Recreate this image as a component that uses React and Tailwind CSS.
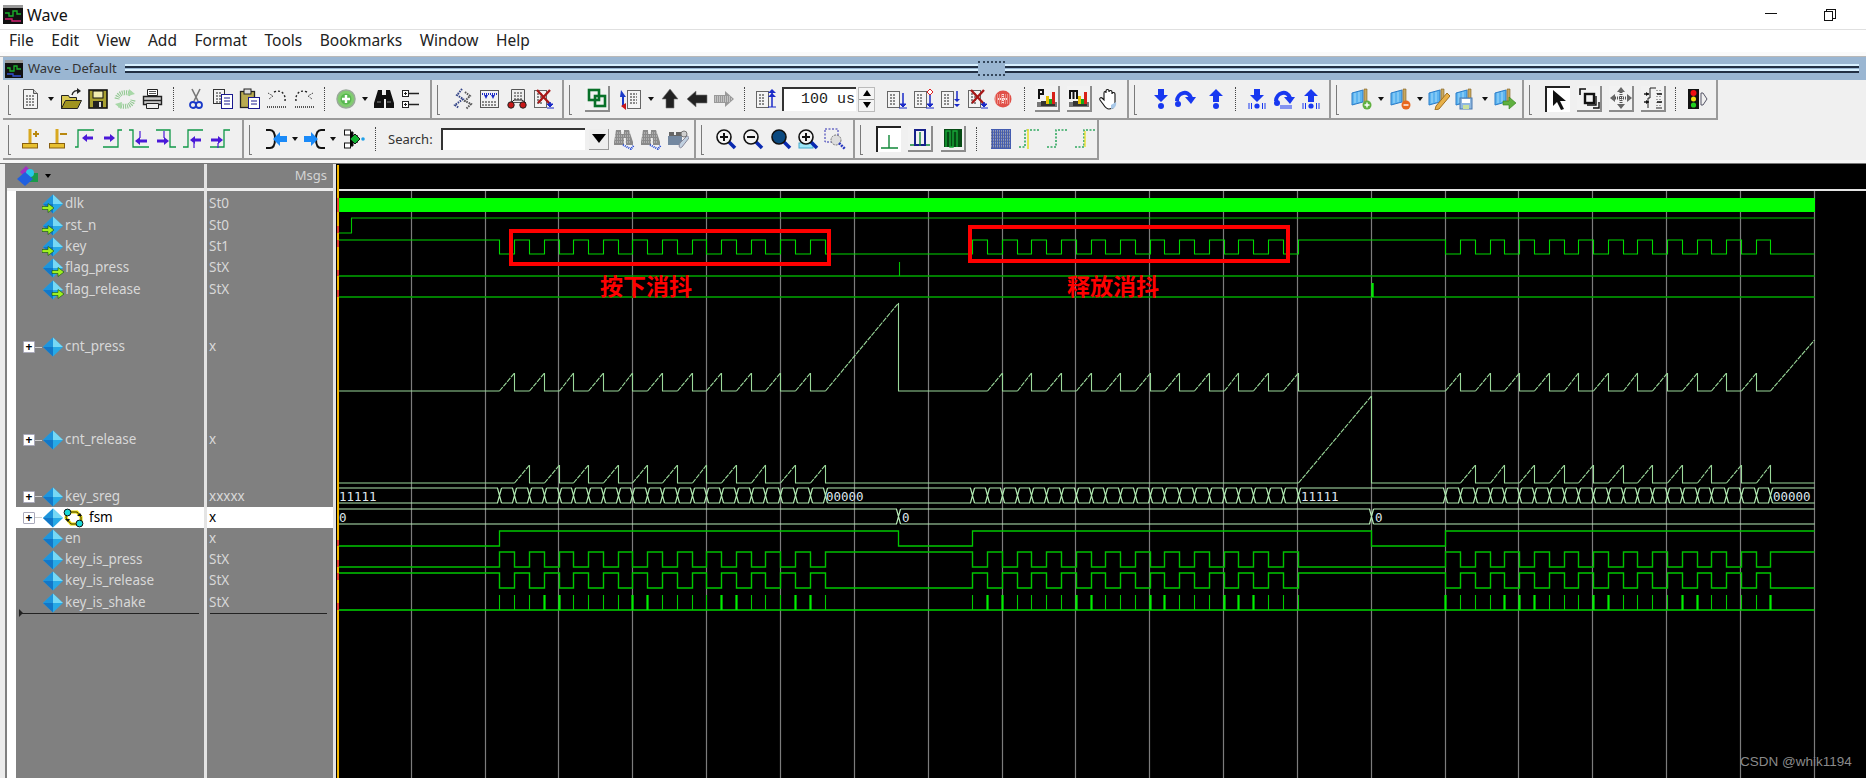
import React from 'react';

const UI_FONT = { fontFamily: '"Noto Sans", "Liberation Sans", sans-serif' };

const Ic = ({ children, w = 22, h = 22 }) => (
  <svg width={w} height={h} viewBox={`0 0 ${w} ${h}`} className="shrink-0">{children}</svg>
);

// ---- small shared pieces for the toolbar icons ----
const Page = ({ x = 3, y = 2, w = 13, h = 17, c = '#666' }) => (
  <g>
    <rect x={x + 0.5} y={y + 0.5} width={w} height={h} fill="#f4f4f4" stroke={c} />
    <path d={`M${x + 3} ${y + 4}h${w - 6}M${x + 3} ${y + 7}h${w - 6}M${x + 3} ${y + 10}h${w - 6}M${x + 3} ${y + 13}h${w - 6}`} stroke="#222" strokeDasharray="2 1" />
  </g>
);

const Mag = ({ sign, fill = '#f4f4f4', bar }) => (
  <g>
    {bar && <rect x="2" y="15" width="14" height="5" fill="#9ee8f8" stroke="#4ac" />}
    <path d="M13 13l7 7" stroke="#0a2ab0" strokeWidth="3.5" />
    <circle cx="9" cy="9" r="7" fill={fill} stroke="#111" strokeWidth="1.6" />
    {sign && <path d={sign === '+' ? 'M5 9h8M9 5v8' : 'M5 9h8'} stroke="#111" strokeWidth="2" />}
  </g>
);

const Flag = ({ children }) => (
  <g>
    <path d="M1 5l11-3v12l-11 3z" fill="#5cb4f0" stroke="#2a7cc8" />
    <path d="M4 5v10M8 4v10" stroke="#a6dcfa" />
    <path d="M13 1l3 0 0 14-3 0z" fill="#c8a860" stroke="#806020" strokeWidth="0.6" />
    {children}
  </g>
);

const Bracket = ({ d, arrow, tick }) => (
  <Ic>
    <path d={d} stroke="#109848" strokeWidth="1.3" fill="none" />
    {tick && <path d={tick} stroke="#4a18d8" strokeWidth="1.2" />}
    <path d={arrow} fill="#4a18d8" />
  </Ic>
);

const Dither = ({ d, c = '#888', w = 5 }) => (
  <path d={d} stroke={c} strokeWidth={w} strokeDasharray="1 1" fill="none" />
);

// ---- row 1 icons ----
const NewDoc = () => <Ic><path d="M3.5 1.5h10l4 4v15h-14z" fill="#f4f4f4" stroke="#555" /><path d="M13.5 1.5v4h4" fill="#ccc" stroke="#555" /><path d="M6 8h8M6 11h8M6 14h8M6 17h8" stroke="#222" strokeDasharray="2 1" /></Ic>;
const OpenIc = () => <Ic><path d="M1.5 7.5h7l1 2h7v11h-15z" fill="#d8c850" stroke="#222" /><path d="M1.5 20.5l4-8h16l-4 8z" fill="#a09420" stroke="#222" /><path d="M12 7c1-4 4-5 7-4" stroke="#222" strokeWidth="1.4" fill="none" /><path d="M17 0l4 3-4 3z" fill="#222" /></Ic>;
const SaveIc = () => <Ic><rect x="2" y="2" width="18" height="18" fill="#a8a030" stroke="#111" strokeWidth="1.6" /><rect x="6" y="3" width="10" height="7" fill="#f2eeb0" stroke="#111" /><rect x="6" y="13" width="10" height="7" fill="#222" /><rect x="12" y="14" width="2" height="5" fill="#ddd" /></Ic>;
const ReloadIc = () => <Ic><Dither c="#90c890" w="5" d="M3 11c1-6 8-8 14-5" /><Dither c="#90c890" w="5" d="M19 12c-1 6-8 8-14 5" /><path d="M15 1l6 5-7 2zM7 21l-6-5 7-2z" fill="#a8d8a8" /></Ic>;
const PrintIc = () => <Ic><path d="M6.5 1.5h10v6h-10z" fill="#fff" stroke="#222" /><path d="M8 3.5h7M8 5.5h7" stroke="#555" /><path d="M2.5 8.5h18v8h-18z" fill="#c8c8c8" stroke="#222" strokeWidth="1.4" /><path d="M3 12.5h17" stroke="#222" strokeWidth="1.4" /><path d="M5.5 15.5h12v5h-12z" fill="#eee" stroke="#222" /></Ic>;
const CutIc = () => <Ic w={14}><path d="M3 1l6 12M11 1l-6 12" stroke="#777" strokeWidth="1.6" /><circle cx="4" cy="17" r="3" fill="none" stroke="#1a3ac8" strokeWidth="1.8" /><circle cx="10" cy="17" r="3" fill="none" stroke="#1a3ac8" strokeWidth="1.8" /></Ic>;
const CopyIc = () => <Ic><Page x={1} y={1} w={11} h={14} c="#333" /><g><rect x="9.5" y="6.5" width="11" height="14" fill="#fff" stroke="#1a1a90" /><path d="M12 10h6M12 13h6M12 16h6" stroke="#1a1a90" /></g></Ic>;
const PasteIc = () => <Ic><rect x="1.5" y="3.5" width="14" height="16" fill="#b8aa50" stroke="#222" strokeWidth="1.3" /><rect x="5" y="1" width="7" height="5" fill="#ddd" stroke="#222" /><rect x="9.5" y="9.5" width="11" height="11" fill="#fff" stroke="#1a1a90" /><path d="M12 13h6M12 16h6" stroke="#1a1a90" /></Ic>;
const UndoIc = () => <Ic><path d="M8 4c7-3 12 2 11 9" stroke="#222" strokeWidth="1.4" strokeDasharray="2 2" fill="none" /><path d="M2 5l5 3-4 3" stroke="#222" strokeDasharray="1 1" fill="none" /><path d="M1 19h19" stroke="#555" strokeWidth="2" strokeDasharray="1 1" /></Ic>;
const RedoIc = () => <Ic><path d="M14 4c-7-3-12 2-11 9" stroke="#222" strokeWidth="1.4" strokeDasharray="2 2" fill="none" /><path d="M20 5l-5 3 4 3" stroke="#222" strokeDasharray="1 1" fill="none" /><path d="M2 19h19" stroke="#555" strokeWidth="2" strokeDasharray="1 1" /></Ic>;
const AddIc = () => <Ic><circle cx="11" cy="11" r="9" fill="#80cc70" stroke="#9a9" strokeWidth="1.5" /><circle cx="11" cy="11" r="5.5" fill="#58b850" /><path d="M7 11h8M11 7v8" stroke="#fff" strokeWidth="2.4" /></Ic>;
const BinocIc = ({ c = '#111' }) => <Ic><path d="M5 2h4v5h4V2h4l4 13v5h-8v-9h-2v9H1v-5z" fill={c} /><path d="M4 14h4M14 14h4" stroke="#888" /></Ic>;
const TreeFind = () => <Ic w={20}><rect x="1.5" y="2.5" width="6" height="6" fill="#fff" stroke="#222" /><rect x="1.5" y="13.5" width="6" height="6" fill="#fff" stroke="#222" /><path d="M3 5.5h3M4.5 4v3M3 16.5h3M4.5 15v3" stroke="#222" /><path d="M8 5.5h10M8 16.5h10" stroke="#222" strokeWidth="1.4" /></Ic>;
const ZigIc = () => <Ic><path d="M10 1l-5 6 6 4-8 6 4 3" stroke="#334488" strokeWidth="2" strokeDasharray="1.5 1" fill="none" /><path d="M13 4l5 4-5 5 6 3-5 5" stroke="#555" strokeWidth="2" strokeDasharray="1.5 1" fill="none" /></Ic>;
const GridIc = () => <Ic><rect x="1.5" y="2.5" width="18" height="17" fill="#f2f2f2" stroke="#555" /><path d="M3 6h15" stroke="#1a2ac8" strokeWidth="2" strokeDasharray="1 1" /><path d="M5 7l2 4 2-4zM12 7l2 4 2-4z" fill="#1a2ac8" /><path d="M3 14h15M3 17h15" stroke="#222" strokeDasharray="2 1" /></Ic>;
const WheelDoc = () => <Ic><path d="M5.5 1.5h13v13h-13z" fill="#eee" stroke="#555" /><path d="M8 5h8M8 8h8M8 11h8" stroke="#333" strokeDasharray="2 1" /><path d="M5 15l3-3 8 0 4 3" stroke="#222" fill="none" /><circle cx="5" cy="17" r="3.2" fill="#c81818" stroke="#222" /><circle cx="17" cy="17" r="3.2" fill="#c81818" stroke="#222" /></Ic>;
const DocRedX = () => <Ic><Page x={1} y={2} w={12} h={17} /><path d="M4 2l13 14M17 2L5 15" stroke="#a81818" strokeWidth="2.4" /><path d="M17 14v5" stroke="#1a2ac8" strokeWidth="1.6" /><path d="M14 16h6l-3 3zM14 20h7" fill="#1a2ac8" stroke="#1a2ac8" /></Ic>;
const TwoSq = () => <Ic><rect x="3" y="3" width="10" height="10" fill="none" stroke="#087028" strokeWidth="2.6" /><rect x="9" y="9" width="10" height="10" fill="none" stroke="#087028" strokeWidth="2.6" /></Ic>;
const DocArrows = () => <Ic w={24}><path d="M1 2l5 7H4v9H2V9H0z" fill="#1a3ac8" /><path d="M1 18l5-3v7z" fill="#c81818" /><Page x={7} y={2} w={13} h={18} /></Ic>;
const UpArrow = () => <Ic w={18}><path d="M9 1l8 10h-4v9H5v-9H1z" fill="#222" stroke="#777" strokeWidth="0.6" /></Ic>;
const LeftArrow = () => <Ic><path d="M1 11l9-8v4h11v8H10v4z" fill="#222" stroke="#777" strokeWidth="0.6" /></Ic>;
const RightArrowDim = () => <Ic><path d="M21 11l-9-8v4H1v8h11v4z" fill="#999" /><Dither c="#ececec" w="1" d="M2 9h16M2 11h18M2 13h16" /></Ic>;
const DocMark = ({ children }) => <Ic w={22}><Page x={1} y={3} w={12} h={16} />{children}</Ic>;
const HatchRed = () => <Ic w={20}><circle cx="10" cy="11" r="8.5" fill="#e05048" /><Dither c="#f8c8c0" w="1" d="M2 7h16M2 9h16M2 11h16M2 13h16M2 15h16" /><path d="M5 11h10M10 6v10" stroke="#fbe0dc" strokeWidth="2" strokeDasharray="1 1" /></Ic>;
const Bars = ({ letter }) => (
  <Ic w={20}>
    <rect x="0" y="15" width="20" height="5" fill="#777" />
    <rect x="4" y="14" width="14" height="5" fill="#333" />
    <rect x="9" y="9" width="3" height="8" fill="#e8c000" />
    <rect x="12" y="12" width="3" height="5" fill="#18a818" />
    <rect x="15" y="5" width="3" height="12" fill="#d82018" />
    <path d={letter === 'p' ? 'M1 2h6v6H3v4H1zM3 4v2h2V4z' : 'M0 3h9v9H7V5H5.5v7h-2V5H2v7H0z'} fill="#111" fillRule="evenodd" />
  </Ic>
);
const HandIc = () => <Ic><path d="M6 12V5c0-2 2-2 2 0V3c0-2 3-2 3 0v1c0-2 3-2 3 0v2c0-2 3-2 3 0v8c0 4-2 7-6 7-3 0-4-2-6-5l-3-4c-1-2 1-3 2-2z" fill="#fff" stroke="#111" strokeWidth="1.1" /><path d="M13 21c3 0 6-3 5-7l-5 3z" fill="#a8c8e8" /></Ic>;
const BlueDown = ({ base }) => <Ic w={18}><path d="M6 1h6v6h4l-7 7-7-7h4z" fill="#1838f0" />{base === 'dot' ? <circle cx="9" cy="18" r="3" fill="#1838f0" /> : <g><circle cx="9" cy="18" r="2.6" fill="#1838f0" /><path d="M1 15v6M3.5 15v6M14.5 15v6M17 15v6" stroke="#1838f0" /></g>}</Ic>;
const BlueUp = ({ base }) => <Ic w={18}><path d="M6 14h6V8h4L9 1 2 8h4z" fill="#1838f0" />{base === 'dot' ? <circle cx="9" cy="18" r="3" fill="#1838f0" /> : <g><circle cx="9" cy="18" r="2.6" fill="#1838f0" /><path d="M1 15v6M3.5 15v6M14.5 15v6M17 15v6" stroke="#1838f0" /></g>}</Ic>;
const BlueCurve = ({ bars }) => <Ic><path d="M3 13C3 5 14 1 17 10" stroke="#1838f0" strokeWidth="4" fill="none" /><path d="M11 9h11l-5 7z" fill="#1838f0" /><circle cx="4" cy={bars ? 15 : 16} r="3" fill="#1838f0" />{bars && <path d="M8 17v4M10 17v4M12 17v4M14 17v4M16 17v4M18 17v4" stroke="#1838f0" />}</Ic>;
const Flag1 = () => <Ic><Flag><circle cx="16" cy="17" r="4.5" fill="#60b040" /><path d="M13.5 17h5M16 14.5v5" stroke="#fff" strokeWidth="1.4" /></Flag></Ic>;
const Flag2 = () => <Ic><Flag><circle cx="16" cy="17" r="4.5" fill="#e86820" /><path d="M13.5 17h5" stroke="#fff" strokeWidth="1.4" /></Flag></Ic>;
const Flag3 = () => <Ic><Flag><path d="M19 5l3 3-11 13-4 1 1-4z" fill="#e8b048" stroke="#a07020" /></Flag></Ic>;
const Flag4 = () => <Ic><Flag><rect x="5" y="10" width="12" height="11" fill="#90b8e0" stroke="#4878b0" /><rect x="7" y="11" width="8" height="4" fill="#fff" /><rect x="8" y="17" width="6" height="4" fill="#c8e0a0" /></Flag></Ic>;
const Flag5 = () => <Ic><Flag><path d="M9 13h6v-4l7 6-7 6v-4H9z" fill="#60b040" stroke="#308018" strokeWidth="0.6" /></Flag></Ic>;
const PointerIc = () => <Ic w={18}><path d="M3 1v16l4-4 4 8 3-1-4-8h6z" fill="#111" /></Ic>;
const ZoomBox = () => <Ic><path d="M2 8V2h6" stroke="#111" strokeWidth="1.6" fill="none" /><rect x="7" y="7" width="9" height="9" fill="none" stroke="#111" strokeWidth="2.4" /><path d="M18 9v9H9M21 15v6h-6" stroke="#111" strokeWidth="1.4" fill="none" /></Ic>;
const PanIc = () => <Ic><Dither c="#555" w="3" d="M11 3v16M3 11h16" /><path d="M11 0l4 5H7zM11 22l4-5H7zM0 11l5-4v8zM22 11l-5-4v8z" fill="#666" /></Ic>;
const WaveCols = () => <Ic><path d="M14 1h-6v10h-2v10M14 21h6" stroke="#222" fill="none" /><path d="M2 7h5M2 15h5" stroke="#222" strokeWidth="1.4" /><path d="M4 5l3 2-3 2zM4 13l3 2-3 2z" fill="#111" /><path d="M15 3v17M18 3v17" stroke="#555" strokeDasharray="1 2" /><path d="M15 7h5M15 15h5" stroke="#111" strokeWidth="1.4" /></Ic>;
const TrafficIc = () => <Ic w={22}><rect x="1" y="1" width="11" height="20" fill="#111" /><circle cx="6.5" cy="5" r="3" fill="#f01010" /><circle cx="6.5" cy="11" r="2.5" fill="#f0e010" /><circle cx="6.5" cy="17" r="2.6" fill="#20d020" /><path d="M14 5h2l4 6-4 6h-2z" fill="#f0f0f0" stroke="#556" /></Ic>;

// ---- row 2 icons ----
const CursorIc = ({ plus }) => (
  <Ic>
    <path d="M10 1v15" stroke="#d8a820" strokeWidth="3" />
    <rect x="2.5" y="15.5" width="15" height="4.5" fill="#e8c030" stroke="#886010" />
    <path d={plus ? 'M13 6h6M16 3v6' : 'M13 6h7'} stroke="#b88810" strokeWidth="2" />
  </Ic>
);
const ArrowBlackIc = ({ dir }) => (
  <Ic>
    <path d={dir === 'in' ? 'M1 2h4c3 0 5 3 5 9s-2 9-5 9H1' : 'M21 2h-4c-3 0-5 3-5 9s2 9 5 9h4'} stroke="#111" strokeWidth="2" fill="none" />
    <path d={dir === 'in' ? 'M8 11l7-7v4h7v6h-7v4z' : 'M14 11l-7-7v4H0v6h7v4z'} fill="#1a8af8" />
  </Ic>
);
const FindNode = () => <Ic><rect x="1.5" y="2" width="6" height="5" fill="#fff" stroke="#111" /><rect x="1.5" y="15" width="6" height="5" fill="#fff" stroke="#111" /><path d="M7 4h3v14H7M10 11h3" stroke="#111" /><path d="M14 11l-5-4v8z" fill="#111" transform="rotate(180 12 11)" /><path d="M12 6l5 5-5 5-5-5z" fill="#10b030" stroke="#111" /><circle cx="20" cy="11" r="1.8" fill="#20a0e8" /></Ic>;
const BinocShape = () => <path d="M3 2h5v4h3V2h5l4 12v3h-7v-7h-2v7H1v-3z" fill="#8a8a8a" />;
const BinoDim = () => <Ic><BinocShape /><path d="M2 5h16M2 8h16M2 11h16M2 14h16" stroke="#d0d0d0" strokeDasharray="1 1" /><Dither c="#2048d8" w="2" d="M10 17l8 4 3-4" /></Ic>;
const WrenchBino = () => <Ic><path d="M2 4h5v3h2V4h5v4H2z" fill="#666" /><path d="M1 8h14v9H1z" fill="#7488a0" /><path d="M13 15l7-7c1 0 2 1 2 2l-7 9c-2 2-4 0-2-4z" fill="#c0d0e0" stroke="#889" /><circle cx="17" cy="6" r="3" fill="#d0d0d0" stroke="#777" /></Ic>;
const MagDotted = () => <Ic><rect x="1" y="1" width="13" height="13" fill="none" stroke="#2a2ab0" strokeDasharray="2 1.5" /><circle cx="12" cy="12" r="5" fill="#dddddd" stroke="#777" strokeDasharray="2 1" /><path d="M15 15l6 6" stroke="#2a3ac0" strokeWidth="2.6" strokeDasharray="2 1" /></Ic>;
const WaveWhite = () => <Ic><path d="M10 6v13M2 19h17" stroke="#108838" strokeWidth="1.4" /></Ic>;
const WaveBlue = () => <Ic><path d="M1 18h5M16 18h5" stroke="#108838" strokeWidth="1.4" /><rect x="6" y="3" width="10" height="15" fill="none" stroke="#16208a" strokeWidth="2" /><path d="M11 5v14" stroke="#108838" strokeWidth="1.4" /></Ic>;
const WaveGreen = () => <Ic><rect x="2" y="2" width="18" height="18" fill="#064a14" /><path d="M4 20V4h4v16h3V4h4v16" stroke="#18a838" strokeWidth="1.4" fill="none" /></Ic>;
const DitherBlue = () => <Ic><rect x="1" y="1" width="20" height="20" fill="#445cb0" /><path d="M1 3h20M1 6h20M1 9h20M1 12h20M1 15h20M1 18h20" stroke="#d8d8d8" strokeDasharray="1 1" /><path d="M1 4h20M1 7h20M1 10h20M1 13h20M1 16h20M1 19h20" stroke="#888" strokeDasharray="1 1" /></Ic>;
const StepDim = ({ y }) => <Ic><path d={y ? 'M1 19h6V2h14' : 'M1 19h9V2h11'} stroke="#30a860" strokeWidth="1.6" strokeDasharray="2 1.5" fill="none" />{y && <path d="M10 1v20" stroke="#e8e030" strokeWidth="1.6" />}</Ic>;
const StepDim2 = () => <Ic><path d="M1 19h9V2h11" stroke="#30a860" strokeWidth="1.6" strokeDasharray="2 1.5" fill="none" /><path d="M11 3v16" stroke="#e8e030" strokeWidth="1.4" /></Ic>;

// ---- toolbar chrome ----
const B = ({ children, className = '' }) => (
  <div className={`w-[27px] h-[27px] shrink-0 flex items-center justify-center ${className}`}>{children}</div>
);
const Raised = ({ children, className = '' }) => (
  <div className={`w-[25px] h-[26px] shrink-0 flex items-center justify-center bg-[#f2f2f2] border-r-2 border-b-2 border-r-[#8c8c8c] border-b-[#8c8c8c] ${className}`}>{children}</div>
);
const Sunken = ({ children, className = '' }) => (
  <div className={`w-[25px] h-[26px] shrink-0 flex items-center justify-center bg-white border-l-2 border-t-2 border-l-[#222] border-t-[#222] ${className}`}>{children}</div>
);
const DD = ({ className = 'w-[11px]' }) => (
  <div className={`shrink-0 flex justify-center ${className}`}>
    <div className="w-0 h-0 border-l-[3.5px] border-r-[3.5px] border-t-[4px] border-l-transparent border-r-transparent border-t-[#111]" />
  </div>
);
const Sep = ({ className = 'w-[16px]' }) => (
  <div className={`shrink-0 flex justify-center h-[24px] ${className}`}>
    <div className="w-px h-full border-l border-dotted border-[#444]" />
  </div>
);
const Seg = ({ className = '', children }) => (
  <div className={`relative shrink-0 h-full flex items-center border-r-2 border-b-2 border-[#9a9a9a] ${className}`}>
    <div className="absolute left-[5px] top-[5px] bottom-[3px] w-[3px] border-l border-b border-[#7a7a7a]" />
    {children}
  </div>
);

const Signal = ({ arrow }) => (
  <svg width="22" height="20" viewBox="0 0 22 20" className="shrink-0">
    <path d="M11 0.5l10 9.5-10 9.5-10-9.5z" fill="#27a9e6" />
    <path d="M11 0.5l10 9.5h-10z" fill="#76d8f5" />
    <path d="M11 0.5L1 10h10z" fill="#1f95dc" />
    <path d="M1 10l10 9.5V10z" fill="#1277c8" />
    {arrow === 'in' && <path d="M0 12.5h6v-3l6 4.5-6 4.5v-3H0z" fill="#a0f020" stroke="#0c5010" strokeWidth="0.6" />}
    {arrow === 'out' && <path d="M10 12.5h6v-3l6 4.5-6 4.5v-3h-6z" fill="#a0f020" stroke="#0c5010" strokeWidth="0.6" />}
  </svg>
);

const PlusBox = () => (
  <div className="flex items-center shrink-0">
    <div className="w-[12px] h-[12px] bg-white border border-[#aab] flex items-center justify-center text-black text-[12px] leading-none font-bold rounded-[1px]">+</div>
    <div className="w-[7px] h-px bg-[#ccc]" />
  </div>
);

const signals = [
  { name: 'dlk', value: 'St0', h: 'h-[22px]', arrow: 'in' },
  { name: 'rst_n', value: 'St0', h: 'h-[21px]', arrow: 'in' },
  { name: 'key', value: 'St1', h: 'h-[21px]', arrow: 'in' },
  { name: 'flag_press', value: 'StX', h: 'h-[22px]', arrow: 'out' },
  { name: 'flag_release', value: 'StX', h: 'h-[21px]', arrow: 'out' },
  { name: 'cnt_press', value: 'x', h: 'h-[94px]', plus: true },
  { name: 'cnt_release', value: 'x', h: 'h-[92px]', plus: true },
  { name: 'key_sreg', value: 'xxxxx', h: 'h-[21px]', plus: true },
  { name: 'fsm', value: 'x', h: 'h-[21px]', plus: true, selected: true },
  { name: 'en', value: 'x', h: 'h-[21px]' },
  { name: 'key_is_press', value: 'StX', h: 'h-[21px]' },
  { name: 'key_is_release', value: 'StX', h: 'h-[22px]' },
  { name: 'key_is_shake', value: 'StX', h: 'h-[21px]' },
];

const FsmIcon = () => (
  <svg width="21" height="20" viewBox="0 0 21 20" className="shrink-0 ml-[-1px]">
    <path d="M4 4h10l4 5v7H8L3 10z" fill="none" stroke="#e8d800" strokeWidth="3" />
    <path d="M4 4h10l4 5v7H8L3 10z" fill="none" stroke="#111" strokeWidth="0.8" />
    <circle cx="4.5" cy="4.5" r="3.4" fill="#18d8d8" stroke="#111" />
    <circle cx="16.5" cy="15.5" r="3.4" fill="#18d8d8" stroke="#111" />
    <path d="M2 11l3 3 2-3zM14 8l3-3 2 3z" fill="#111" />
  </svg>
);

// ---- waveform geometry ----
const t = (n) => Math.round(410.7 + 14.78 * n) + 0.5;
const range = (a, b) => Array.from({ length: b - a + 1 }, (_, i) => a + i);
const TOGGLES = [...range(6, 28), ...range(38, 60), ...range(70, 92)];
const GRID = range(0, 19).map((k) => Math.round(410.7 + 73.85 * k) + 0.5);
const END = 1814.5;

const digital = (hi, lo, startHigh, toggles) => {
  let level = startHigh;
  let d = `M339 ${level ? hi : lo}`;
  toggles.forEach((n) => {
    const x = t(n);
    d += `H${x}`;
    level = !level;
    d += `V${level ? hi : lo}`;
  });
  return `${d}H${END}`;
};

// sawtooth: list of [rampStart, peak] in t() steps
const saw = (base, peak, ramps, bigs) => {
  const items = [
    ...ramps.map(([a, b]) => ({ a: t(a), b: t(b), top: peak })),
    ...bigs,
  ].sort((p, q) => p.a - q.a);
  let flat = `M339 ${base}`;
  let rise = '';
  items.forEach(({ a, b, top, open }) => {
    flat += `H${a}`;
    rise += `M${a} ${base}L${b} ${top}`;
    if (open) {
      flat += 'M9999 0';
    } else {
      flat += `M${b} ${top}V${base}`;
    }
  });
  const last = items[items.length - 1];
  if (!last.open) flat += `H${END}`;
  return { flat, rise };
};

const pairs = (a, b) => range(0, Math.floor((b - a) / 2)).map((i) => [a + i * 2, a + i * 2 + 1]);

const pressSaw = saw(
  391,
  373,
  [...pairs(6, 26), ...pairs(39, 59), ...pairs(70, 90)],
  [
    { a: t(28), b: t(33), top: 303 },
    { a: t(92), b: END, top: 340, open: true },
  ],
);
const releaseSaw = saw(
  483,
  465,
  [...pairs(7, 27), ...pairs(71, 91)],
  [{ a: t(60), b: t(65), top: 396 }],
);

const busPath = (top, bot, xs) => {
  let d = '';
  let from = 339;
  xs.forEach((x) => {
    d += `M${from} ${top}H${x - 2}L${x + 2} ${bot}M${from} ${bot}H${x - 2}L${x + 2} ${top}`;
    from = x + 2;
  });
  return `${d}M${from} ${top}H${END}M${from} ${bot}H${END}`;
};

const THICK = new Set([9, 10, 15, 16, 21, 22, 26, 27, 39, 40, 45, 46, 50, 51, 55, 56, 57, 70, 74, 75, 76, 80, 81, 86, 87, 92]);
const RED_MARKS = [[198, 212], [226, 233], [240, 247], [270, 276], [290, 297], [540, 546], [560, 567], [573, 580], [603, 610]];

const WaveCanvas = () => (
  <svg width="1530" height="614" viewBox="336 164 1530 614" className="block">
    <rect x="336" y="164" width="1530" height="614" fill="#000" />
    {GRID.map((x) => (
      <path key={x} d={`M${x} 191V778`} stroke="#7c7c7c" strokeWidth="1.2" />
    ))}
    <path d="M339 190H1866" stroke="#e4e4e4" strokeWidth="2" />
    <rect x="337" y="165" width="2" height="613" fill="#f0b400" />
    <rect x="339" y="198" width="1476" height="14" fill="#00ff00" />

    <path d="M339 233H351.5V218H1814.5" stroke="#00c800" fill="none" strokeWidth="1.1" />
    <path d={digital(240, 254, true, TOGGLES)} stroke="#00d800" fill="none" strokeWidth="1.1" />
    <path d="M339 276H1814.5" stroke="#00a800" strokeWidth="1.4" />
    <path d="M899.5 262V276" stroke="#00c000" strokeWidth="1.1" />
    <path d="M339 297H1814.5" stroke="#00a800" strokeWidth="1.4" />
    <path d="M1372.5 283V297" stroke="#00e800" strokeWidth="2.4" />

    <path d={pressSaw.flat} stroke="#9ad89a" fill="none" strokeWidth="1.1" />
    <path d={pressSaw.rise} stroke="#9ad89a" fill="none" strokeWidth="1.1" strokeDasharray="5 1" />
    <path d={releaseSaw.flat} stroke="#9ad89a" fill="none" strokeWidth="1.1" />
    <path d={releaseSaw.rise} stroke="#9ad89a" fill="none" strokeWidth="1.1" strokeDasharray="5 1" />

    <path d={busPath(488, 503, TOGGLES.map(t))} stroke="#b0e8b0" fill="none" strokeWidth="1.2" />
    <path d={busPath(509, 524, [t(33), t(65)])} stroke="#b8ecb8" fill="none" strokeWidth="1.2" />
    <g fill="#dfe6ee" fontSize="12.5" style={{ fontFamily: '"DejaVu Sans Mono", monospace' }}>
      <text x="339" y="501">11111</text>
      <text x="826" y="501">00000</text>
      <text x="1301" y="501">11111</text>
      <text x="1773" y="501">00000</text>
      <text x="339" y="522">0</text>
      <text x="902" y="522">0</text>
      <text x="1375" y="522">0</text>
    </g>

    <path d={digital(531, 546, false, [6, 33, 38, 65, 70])} stroke="#00c800" fill="none" strokeWidth="1.3" />
    <path d={digital(552, 567, false, TOGGLES)} stroke="#00c000" fill="none" strokeWidth="1.4" />
    <path d={digital(573, 588, true, TOGGLES)} stroke="#00c800" fill="none" strokeWidth="1.4" />
    <path d="M339 610H1814.5" stroke="#00d800" strokeWidth="1.3" />
    {TOGGLES.map((n) => (
      <path key={n} d={`M${t(n)} 595V610`} stroke={THICK.has(n) ? '#00f000' : '#00c800'} strokeWidth={THICK.has(n) ? 2.2 : 1.1} />
    ))}

    {RED_MARKS.map(([a, b]) => (
      <rect key={a} x="337" y={a} width="2" height={b - a} fill="#e84030" />
    ))}
  </svg>
);

export default function App() {
  return (
    <div className="w-[1866px] h-[778px] overflow-hidden bg-[#f0f0f0] flex flex-col text-[#222]" style={UI_FONT}>
      {/* title bar */}
      <div className="h-[30px] shrink-0 bg-white border-b border-[#e0e0e0] flex items-center relative">
        <svg width="20" height="19" viewBox="0 0 20 19" className="ml-[3px] shrink-0">
          <rect width="20" height="19" fill="#111" />
          <rect y="0" width="20" height="3" fill="#999" />
          <path d="M2 8h4v3h4V6h4v3h4" stroke="#1bb02b" strokeWidth="1.4" fill="none" />
          <path d="M2 14h7v2h9" stroke="#d02070" strokeWidth="1.4" fill="none" />
        </svg>
        <span className="ml-[4px] text-[16px] leading-none text-[#111]">Wave</span>
        <div className="absolute left-[1765px] top-[13px] w-[12px] h-px bg-[#111]" />
        <div className="absolute left-[1824px] top-[11px] w-[9px] h-[10px] border border-[#111] bg-white z-10" />
        <div className="absolute left-[1826px] top-[9px] w-[10px] h-[10px] border border-[#111]" />
      </div>

      {/* menu */}
      <div className="h-[22px] shrink-0 bg-white flex items-center gap-[17.5px] pl-[9px] text-[15.5px] leading-none text-[#222]">
        <span>File</span><span>Edit</span><span>View</span><span>Add</span><span>Format</span><span>Tools</span><span>Bookmarks</span><span>Window</span><span>Help</span>
      </div>
      <div className="h-[5px] shrink-0 bg-[#fafafa] border-b border-[#b8b8b8]" />

      {/* window header */}
      <div className="h-[23px] shrink-0 ml-[3px] bg-[#9ab6d2] flex items-center">
        <svg width="18" height="18" viewBox="0 0 18 18" className="ml-[2px] shrink-0">
          <rect width="18" height="18" fill="#111" />
          <rect y="0" width="18" height="3" fill="#999" />
          <path d="M2 8h3v3h4V6h3v3h4" stroke="#1bb02b" strokeWidth="1.3" fill="none" />
          <path d="M2 14h6v2h8" stroke="#3050d0" strokeWidth="1.3" fill="none" />
        </svg>
        <span className="ml-[5px] text-[13px] leading-none text-[#333]">Wave - Default</span>
        <div className="ml-[8px] flex-1 relative h-[11px] mr-[7px]">
          <div className="h-[2px] mt-[1px] bg-[#d8f0ff]" />
          <div className="h-[2px] bg-[#223044]" />
          <div className="h-[2px] mt-[1px] bg-[#d8f0ff]" />
          <div className="h-[2px] bg-[#223044]" />
          <div className="absolute left-[853px] top-[-2px] w-[27px] h-[15px] bg-[#9ab6d2] border-y-2 border-dotted border-[#35475c]" />
        </div>
      </div>

      {/* toolbar row 1 */}
      <div className="h-[40px] shrink-0 ml-[3px] flex items-center">
        <Seg className="w-[429px] pl-[14px]">
          <B><NewDoc /></B><DD className="w-[13px]" />
          <B><OpenIc /></B><B><SaveIc /></B><B><ReloadIc /></B><B><PrintIc /></B><Sep className="w-[17px]" />
          <B><CutIc /></B><B><CopyIc /></B><B><PasteIc /></B><B><UndoIc /></B><B><RedoIc /></B><Sep className="w-[15px]" />
          <B><AddIc /></B><DD /><B><BinocIc /></B><B><TreeFind /></B>
        </Seg>
        <Seg className="w-[132px] pl-[17px]">
          <B><ZigIc /></B><B><GridIc /></B><B><WheelDoc /></B><B><DocRedX /></B>
        </Seg>
        <Seg className="w-[565px] pl-[21px]">
          <Raised><TwoSq /></Raised>
          <B className="ml-[8px] w-[24px]"><DocArrows /></B><DD className="w-[11px]" />
          <B><UpArrow /></B><B><LeftArrow /></B><B><RightArrowDim /></B><Sep className="w-[15px]" />
          <B><DocMark><path d="M17 3v16" stroke="#1a2ac8" strokeWidth="1.5" /><path d="M13 5h8l-4-4zM13 9h8l-4-4z" fill="#1a2ac8" /><path d="M13 19h8" stroke="#1a2ac8" /></DocMark></B>
          <div className="ml-[3px] w-[74px] h-[24px] shrink-0 bg-white border-l-2 border-t-2 border-l-[#333] border-t-[#333] flex items-center justify-end pr-[1px] text-[15px] text-[#222]" style={{ fontFamily: '"Liberation Mono", monospace' }}>100 us</div>
          <div className="ml-[2px] w-[17px] h-[25px] shrink-0 flex flex-col gap-[1px] border border-[#bbb] bg-[#f4f4f4]">
            <div className="flex-1 flex items-center justify-center"><div className="w-0 h-0 border-l-[4px] border-r-[4px] border-b-[6px] border-l-transparent border-r-transparent border-b-black" /></div>
            <div className="flex-1 flex items-center justify-center border-t border-[#999]"><div className="w-0 h-0 border-l-[4px] border-r-[4px] border-t-[6px] border-l-transparent border-r-transparent border-t-black" /></div>
          </div>
          <B className="ml-[8px]"><DocMark><path d="M17 5v14" stroke="#1a2ac8" strokeWidth="1.5" /><path d="M13 20h8M14 16l3 3 3-3z" fill="#1a2ac8" stroke="#1a2ac8" /></DocMark></B>
          <B><DocMark><path d="M17 1l3 3-3 3-3-3z" fill="#fff" stroke="#e02020" /><path d="M17 7v12" stroke="#1a2ac8" strokeWidth="1.5" /><path d="M13 20h8M14 16l3 3 3-3z" fill="#1a2ac8" stroke="#1a2ac8" /></DocMark></B>
          <B><DocMark><path d="M17 3v10" stroke="#1a2ac8" strokeWidth="1.5" /><path d="M14 11l3 3 3-3zM14 16l3 3 3-3z" fill="#1a2ac8" /></DocMark></B>
          <B><DocRedX /></B>
          <B className="ml-[-2px]"><HatchRed /></B><Sep className="w-[17px]" />
          <Raised className="ml-[2px]"><Bars letter="p" /></Raised>
          <Raised className="ml-[7px]"><Bars letter="m" /></Raised>
          <B className="ml-[3px]"><HandIc /></B>
        </Seg>
        <Seg className="w-[202px] pl-[18px]">
          <B><BlueDown base="dot" /></B><B className="ml-[-3px]"><BlueCurve /></B><B className="ml-[4px]"><BlueUp base="dot" /></B><Sep className="w-[12px]" />
          <B className="ml-[2px]"><BlueDown base="bars" /></B><B><BlueCurve bars /></B><B><BlueUp base="bars" /></B>
        </Seg>
        <Seg className="w-[193px] pl-[17px]">
          <B><Flag1 /></B><DD className="w-[12px]" />
          <B><Flag2 /></B><DD className="w-[12px]" />
          <B className="ml-[-1px]"><Flag3 /></B><B><Flag4 /></B><DD className="w-[12px]" /><B><Flag5 /></B>
        </Seg>
        <Seg className="w-[194px] pl-[21px]">
          <Sunken><PointerIc /></Sunken>
          <Raised className="ml-[7px]"><ZoomBox /></Raised>
          <Raised className="ml-[7px]"><PanIc /></Raised>
          <Raised className="ml-[7px]"><WaveCols /></Raised>
          <Sep className="w-[19px]" />
          <B className="ml-[-1px]"><TrafficIc /></B>
        </Seg>
      </div>

      {/* toolbar row 2 */}
      <div className="h-[40px] shrink-0 ml-[3px] flex items-center">
        <Seg className="w-[241px] pl-[14px]">
          <B><CursorIc plus /></B><B><CursorIc /></B>
          <B><Bracket d="M1 19h3V2h16" arrow="M8 10l5-4v2.5h6v3h-6V14z" /></B>
          <B><Bracket d="M21 2h-4V19H2" arrow="M14 10l-5-4v2.5H3v3h6V14z" /></B>
          <B><Bracket d="M1 2h4v17h16" arrow="M7 13l5-4v2.5h7v3h-7V17z" tick="M12 3v7" /></B>
          <B><Bracket d="M1 2h14v17h6" arrow="M14 13l-5-4v2.5H2v3h7V17z" tick="M9 3v7" /></B>
          <B><Bracket d="M1 19h5V2h15" arrow="M8 12l5-4v2.5h6v3h-6V16z" tick="M12 15v5" /></B>
          <B><Bracket d="M1 19h14V2h6" arrow="M14 12l-5-4v2.5H2v3h7V16z" tick="M9 15v5" /></B>
        </Seg>
        <Seg className="w-[452px] pl-[18px]">
          <B><ArrowBlackIc dir="in" /></B><DD className="w-[12px]" />
          <B><ArrowBlackIc dir="out" /></B><DD className="w-[10px]" />
          <B className="ml-[2px]"><FindNode /></B><Sep className="w-[16px]" />
          <span className="ml-[5px] text-[13px] leading-none text-[#333] w-[50px] shrink-0">Search:</span>
          <div className="ml-[3px] w-[144px] h-[22px] shrink-0 bg-white border-l-2 border-t-2 border-l-[#333] border-t-[#333]" />
          <div className="ml-[4px] w-[20px] h-[21px] shrink-0 flex items-center justify-center bg-[#eee] border-r border-b border-[#999]">
            <div className="w-0 h-0 border-l-[7px] border-r-[7px] border-t-[9px] border-l-transparent border-r-transparent border-t-black" />
          </div>
          <B className="ml-[1px]"><BinoDim /></B><B><BinoDim /></B><B><WrenchBino /></B>
        </Seg>
        <Seg className="w-[159px] pl-[17px]">
          <B className="ml-[-1px]"><Ic><Mag sign="+" /></Ic></B>
          <B><Ic><Mag sign="-" /></Ic></B>
          <B className="ml-px"><Ic><Mag fill="#0c4a80" /></Ic></B>
          <B><Ic><Mag sign="+" bar /></Ic></B>
          <B><MagDotted /></B>
        </Seg>
        <Seg className="w-[244px] pl-[21px]">
          <Sunken><WaveWhite /></Sunken>
          <Raised className="ml-[7px]"><WaveBlue /></Raised>
          <Raised className="ml-[8px]"><WaveGreen /></Raised>
          <Sep className="w-[21px]" />
          <B><DitherBlue /></B>
          <B className="ml-[1px]"><StepDim y /></B>
          <B className="ml-[1px]"><StepDim /></B>
          <B className="ml-[1px]"><StepDim2 /></B>
        </Seg>
      </div>

      <div className="h-[4px] shrink-0 bg-[#f6f6f6] border-b border-[#777]" />

      {/* wave window */}
      <div className="flex-1 flex min-h-0">
        <div className="w-[336px] shrink-0 bg-[#808080] flex flex-col border-l-[5px] border-[#ececec]">
          {/* header */}
          <div className="h-[24px] shrink-0 flex">
            <div className="w-[199px] shrink-0 flex items-center pl-[12px]">
              <svg width="22" height="22" viewBox="0 0 22 22" className="shrink-0">
                <path d="M9 1l6 6-6 6-6-6z" fill="#a030c0" />
                <rect x="10" y="8" width="11" height="9" fill="#1a9a4a" />
                <circle cx="13" cy="8" r="4" fill="#28c8e8" />
                <path d="M8 7l8 7-8 7-8-7z" fill="#2060e0" />
              </svg>
              <div className="ml-[6px] w-0 h-0 border-l-[3px] border-r-[3px] border-t-[4px] border-l-transparent border-r-transparent border-t-black" />
            </div>
            <div className="w-[3px] shrink-0 bg-[#e4e4e4]" />
            <div className="w-[126px] shrink-0 flex items-center justify-end pr-[6px] text-[13px] text-[#d4d4d4]">Msgs</div>
            <div className="w-[3px] shrink-0 bg-[#e4e4e4]" />
          </div>
          <div className="h-[3px] shrink-0 flex">
            <div className="ml-[2px] w-[197px] bg-[#eeeeee]" />
            <div className="w-[3px] bg-[#e4e4e4]" />
            <div className="w-[126px] bg-[#eeeeee]" />
            <div className="w-[3px] bg-[#e4e4e4]" />
          </div>
          {/* rows */}
          <div className="flex-1 flex min-h-0">
            <div className="ml-[2px] w-[9px] shrink-0 bg-white" />
            <div className="w-[188px] shrink-0 flex flex-col pt-[2px] relative">
              {signals.map((s) => (
                <div key={s.name} className={`${s.h} shrink-0 flex items-center ${s.selected ? 'bg-white text-black' : 'text-[#d8d8d8]'}`}>
                  <div className="w-[7px] shrink-0" />
                  {s.plus ? <PlusBox /> : <div className="w-[19px] shrink-0" />}
                  <Signal arrow={s.arrow} />
                  {s.selected && <FsmIcon />}
                  <span className={`text-[13.5px] leading-none ${s.selected ? 'ml-[5px]' : 'ml-[1px]'}`}>{s.name}</span>
                </div>
              ))}
              <div className="relative mt-0 ml-[3px] mr-[5px] h-px bg-[#222]">
                <div className="absolute left-0 top-[-4px] w-0 h-0 border-t-[4px] border-b-[4px] border-l-[4px] border-t-transparent border-b-transparent border-l-[#222]" />
              </div>
            </div>
            <div className="w-[3px] shrink-0 bg-[#e4e4e4]" />
            <div className="w-[126px] shrink-0 flex flex-col pt-[2px]">
              {signals.map((s) => (
                <div key={s.name} className={`${s.h} shrink-0 flex items-center pl-[2px] text-[13.5px] leading-none ${s.selected ? 'bg-white text-black' : 'text-[#d8d8d8]'}`}>{s.value}</div>
              ))}
              <div className="ml-[3px] mr-[6px] h-px bg-[#222]" />
            </div>
            <div className="w-[3px] shrink-0 bg-[#e4e4e4]" />
          </div>
        </div>

        {/* the waveform itself, drawing plus annotations on top */}
        <div className="relative flex-1 bg-black overflow-hidden">
          <WaveCanvas />
          <div className="absolute left-[173px] top-[65px] w-[322px] h-[37px] border-4 border-[#ff0000]" />
          <div className="absolute left-[632px] top-[61px] w-[322px] h-[38px] border-4 border-[#ff0000]" />
          <span className="absolute left-[264px] top-[108px] text-[23px] leading-[27px] font-bold text-[#ff0000] whitespace-nowrap" style={{ fontFamily: '"Noto Sans CJK SC", sans-serif' }}>按下消抖</span>
          <span className="absolute left-[731px] top-[108px] text-[23px] leading-[27px] font-bold text-[#ff0000] whitespace-nowrap" style={{ fontFamily: '"Noto Sans CJK SC", sans-serif' }}>释放消抖</span>
          <span className="absolute left-[1404px] top-[589px] text-[13.5px] leading-[18px] text-[#8a8a8a] whitespace-nowrap" style={{ fontFamily: '"Liberation Sans", sans-serif' }}>CSDN @whik1194</span>
        </div>
      </div>
    </div>
  );
}
